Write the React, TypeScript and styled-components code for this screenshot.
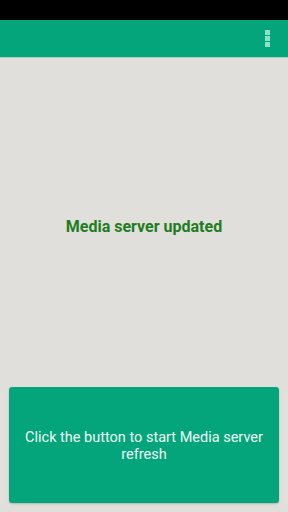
import React from 'react';
import styled, {createGlobalStyle} from 'styled-components';

const GlobalStyle = createGlobalStyle`
  html, body {
    margin: 0;
    padding: 0;
    background: #e1dfdb;
    font-family: Roboto, 'Liberation Sans', sans-serif;
  }
  * {
    box-sizing: border-box;
  }
`;

const Screen = styled.div`
  width: 288px;
  height: 512px;
  display: flex;
  flex-direction: column;
  background: #e1dfdb;
  overflow: hidden;
`;

const StatusBar = styled.div`
  height: 20px;
  background: #000;
`;

const Toolbar = styled.div`
  height: 38px;
  background: #04a57b;
  border-bottom: 1px solid #a9cfc2;
  display: flex;
  justify-content: flex-end;
  align-items: center;
  padding-right: 18px;
`;

const MenuButton = styled.div`
  display: flex;
  flex-direction: column;
  gap: 1px;
`;

const Dot = styled.span`
  width: 5px;
  height: 5px;
  background: #8fe0c6;
`;

const Content = styled.div`
  flex: 1;
  display: flex;
  flex-direction: column;
  padding: 0 9px 9px;
`;

const Message = styled.div`
  flex: 1;
  display: flex;
  align-items: center;
  justify-content: center;
  padding-top: 7px;
  color: #1e7d1e;
  font-size: 16px;
  font-weight: 700;
`;

const RefreshButton = styled.div`
  height: 116px;
  background: #04a57b;
  border-radius: 3px;
  box-shadow: 0 1px 2px rgba(0, 0, 0, 0.2);
  display: flex;
  align-items: center;
  justify-content: center;
  text-align: center;
  color: #eefaf5;
  font-size: 14.5px;
  line-height: 17px;
  padding: 2px 10px 0;
`;

const App = () => {
  return (
    <>
      <GlobalStyle />
      <Screen>
        <StatusBar />
        <Toolbar>
          <MenuButton>
            <Dot />
            <Dot />
            <Dot />
          </MenuButton>
        </Toolbar>
        <Content>
          <Message>Media server updated</Message>
          <RefreshButton>Click the button to start Media server refresh</RefreshButton>
        </Content>
      </Screen>
    </>
  );
};

export default App;
